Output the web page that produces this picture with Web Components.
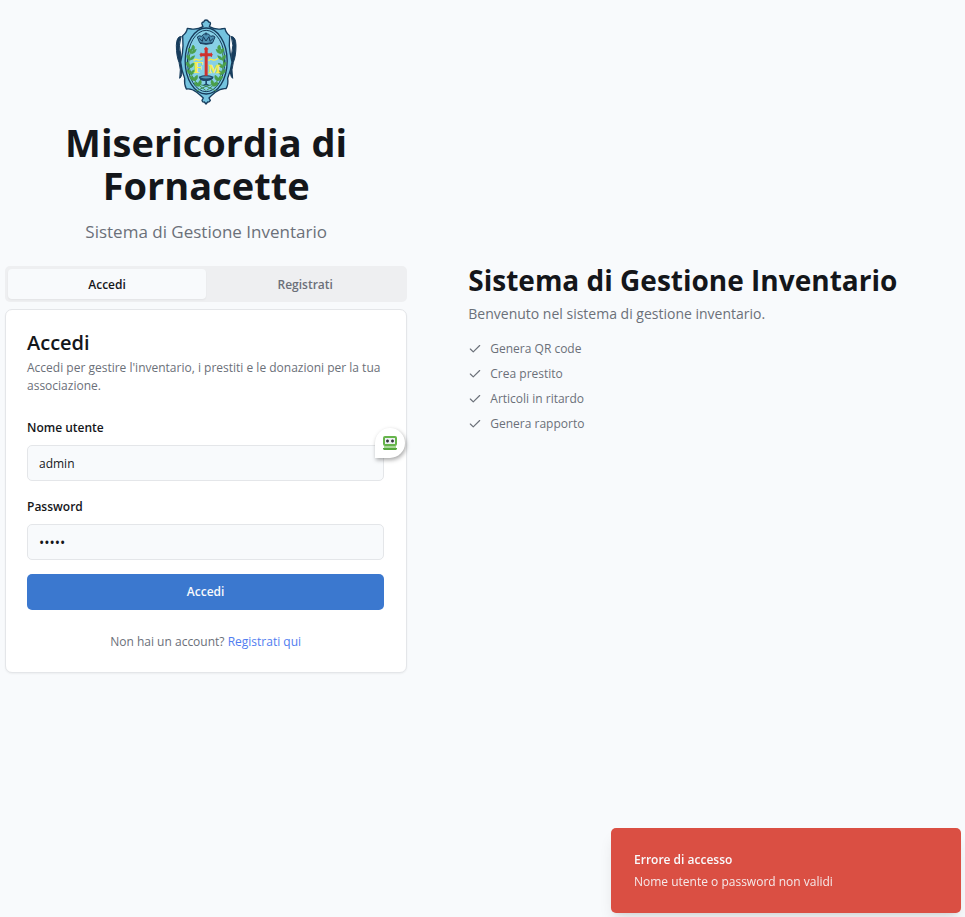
<!DOCTYPE html>
<html lang="it">
<head>
<meta charset="utf-8">
<meta name="viewport" content="width=device-width, initial-scale=1">
<title>Misericordia di Fornacette</title>
<style>
  :root {
    --bg: #f8fafc; --ink: #14161a; --muted: #6b7079; --line: #e4e6e9;
    --primary: #3b78cf; --danger: #da4f43;
  }
  body {
    margin: 0; min-height: 100vh; background: var(--bg); color: var(--ink);
    font: 400 12px/18px "Open Sans", "Noto Sans", sans-serif;
  }
</style>
</head>
<body>
<auth-page>
  <brand-header slot="main">
    <span slot="title">Misericordia di Fornacette</span>
    <span slot="tagline">Sistema di Gestione Inventario</span>
  </brand-header>
  <auth-tabs slot="main"></auth-tabs>
  <login-card slot="main">
    <span slot="title">Accedi</span>
    <span slot="description">Accedi per gestire l'inventario, i prestiti e le donazioni per la tua associazione.</span>
  </login-card>
  <feature-panel slot="aside">
    <span slot="title">Sistema di Gestione Inventario</span>
    <span slot="intro">Benvenuto nel sistema di gestione inventario.</span>
    <check-item>Genera QR code</check-item>
    <check-item>Crea prestito</check-item>
    <check-item>Articoli in ritardo</check-item>
    <check-item>Genera rapporto</check-item>
  </feature-panel>
</auth-page>
<toast-message>
  <span slot="title">Errore di accesso</span>
  Nome utente o password non validi
</toast-message>

<script>
const define = (name, html, setup) => customElements.define(name, class extends HTMLElement {
  constructor() {
    super();
    this.attachShadow({ mode: 'open' }).innerHTML = '<style>:host,*{box-sizing:border-box}</style>' + html;
  }
  connectedCallback() { if (setup) setup(this, this.shadowRoot); }
});

define('auth-page', `
<style>
  :host { display: grid; grid-template-columns: 9fr 11fr; gap: 61px; align-items: center; padding: 19px 5px; }
  main { display: flex; flex-direction: column; min-width: 0; }
  aside { min-width: 0; }
  @media (max-width: 700px) { :host { grid-template-columns: 1fr; gap: 32px; } }
</style>
<main><slot name="main"></slot></main>
<aside><slot name="aside"></slot></aside>`);

define('brand-crest', `
<style>:host { display: block; } svg { display: block; width: 62px; height: 86px; }</style>
<svg viewBox="47 25 186 258" role="img" aria-label="Stemma della Misericordia">
  <g stroke-linejoin="round" stroke-linecap="round">
    <path d="M65 78Q52 76 51 104Q51 136 59 155Q66 176 61 203Q70 196 68 170Q61 156 64 130Q56 104 65 78ZM216 78Q229 76 230 104Q230 136 222 155Q215 176 220 203Q211 196 213 170Q220 156 217 130Q225 104 216 78Z" fill="#173c5c" stroke="#173c5c" stroke-width="3"/>
    <path d="M128 41Q126 34 133 34Q135 28 140 28Q146 28 148 34Q155 34 153 41L150 48Q166 57 184 55L197 53Q199 66 211 75L210 105Q211 126 218 154Q215 176 205 203Q208 221 200 234Q184 232 168 245Q157 254 149 262L153 269Q150 275 145 274L140 280L135 274Q129 275 128 269L132 262Q122 253 112 245Q96 232 81 235Q74 221 76 203Q66 176 64 154Q71 126 71 105L70 75Q82 66 84 53L97 55Q115 57 131 48Z" fill="#74c3df" stroke="#173c5c" stroke-width="4"/>
    <ellipse cx="140.500" cy="151" rx="63" ry="99" fill="#7dcae3" stroke="#173c5c" stroke-width="4"/>
    <ellipse cx="140.500" cy="151" rx="56" ry="92" fill="#87d0e6" stroke="#173c5c" stroke-width="3"/>
  </g>
  <g fill="none" stroke="#3f8c51" stroke-width="3">
    <path d="M102 106Q82 137 91 176Q101 216 139 239M179 106Q199 137 190 176Q180 216 142 239M105 218Q140 222 170 241M176 218Q141 222 111 241"/>
  </g>
  <g fill="#4a9f4a" stroke="#4a9f4a" stroke-width="2">
    <path d="M101 103q10 8 0 17q-8-8 0-17M88 113q12 3 9 15q-12-3-9-15M111 116q-2 12-14 13q2-12 14-13M83 133q12 4 9 16q-12-4-9-16M106 135q-2 12-14 13q2-12 14-13M81 154q12 4 10 16q-12-4-10-16M104 158q-1 12-13 14q0-13 13-14M83 177q13 2 13 14q-13-2-13-14M105 178q0 12-10 15q-3-12 10-15M91 197q13 0 15 12q-13 2-15-12M114 194q3 12-8 17q-5-12 8-17M105 216q13-2 16 10q-13 3-16-10M124 207q6 11-4 18q-7-10 4-18"/>
    <path transform="translate(281 0) scale(-1 1)" d="M101 103q10 8 0 17q-8-8 0-17M88 113q12 3 9 15q-12-3-9-15M111 116q-2 12-14 13q2-12 14-13M83 133q12 4 9 16q-12-4-9-16M106 135q-2 12-14 13q2-12 14-13M81 154q12 4 10 16q-12-4-10-16M104 158q-1 12-13 14q0-13 13-14M83 177q13 2 13 14q-13-2-13-14M105 178q0 12-10 15q-3-12 10-15M91 197q13 0 15 12q-13 2-15-12M114 194q3 12-8 17q-5-12 8-17M105 216q13-2 16 10q-13 3-16-10M124 207q6 11-4 18q-7-10 4-18"/>
  </g>
  <path d="M121 96L114 79Q119 73 127 77Q132 68 140 69Q149 68 154 77Q162 73 167 79L160 96Q140 102 121 96Z" fill="#4f93b4" stroke="#173c5c" stroke-width="3"/>
  <path d="M119 83L129 92L132 78L140 91L149 78L152 92L162 83M122 98Q140 104 159 98M140 65V74" fill="none" stroke="#173c5c" stroke-width="3"/>
  <g fill="#1f4a6b">
    <path d="M118 198Q140 188 163 198L160 205Q151 212 143 211V219L152 224H129L138 219V211Q125 211 121 205Z"/>
    <path d="M123 200Q140 194 158 200Q140 207 123 200" fill="#5797b4"/>
  </g>
  <g fill="#f5ee51" font-family="Liberation Serif, serif" font-weight="700" text-anchor="middle">
    <text x="117" y="187" font-size="52">F</text><text x="165" y="187" font-size="38" stroke="#f5ee51" stroke-width="1">M</text>
  </g>
  <path d="M104 151Q106 143 114 147Q122 151 129 143M148 151Q151 143 159 147Q168 151 176 143" fill="none" stroke="#f5ee51" stroke-width="4"/>
  <path d="M136 113L140 108L145 113V128H156L161 132L156 137H145V195H136V137H125L120 132L125 128H136Z" fill="#cf332f"/>
  <path d="M134 115H147M125 126V139M156 126V139" stroke="#cf332f" stroke-width="3"/>
</svg>`);

define('brand-header', `
<style>
  :host { display: flex; flex-direction: column; align-items: center; text-align: center; margin-bottom: 23px; }
  h1 { margin: 16px 0 14px; max-width: 320px; font-size: 38px; line-height: 43px; font-weight: 700; }
  p { margin: 0; font-size: 17px; line-height: 22px; color: var(--muted); }
</style>
<brand-crest></brand-crest>
<h1><slot name="title"></slot></h1>
<p><slot name="tagline"></slot></p>`);

define('auth-tabs', `
<style>
  :host { display: grid; grid-template-columns: 1fr 1fr; height: 36px; padding: 3px; border-radius: 5px; background: #eeeff1; margin-bottom: 7px; }
  button { border: 0; border-radius: 4px; background: none; color: var(--muted); font: inherit; font-weight: 600; padding: 1px 0 0; cursor: pointer; }
  button[aria-selected=true] { background: var(--bg); color: var(--ink); box-shadow: 0 1px 2px #0000000d; }
</style>
<button role="tab" aria-selected="true">Accedi</button>
<button role="tab" aria-selected="false">Registrati</button>`,
(host, root) => {
  host.setAttribute('role', 'tablist');
  const tabs = [...root.querySelectorAll('button')];
  tabs.forEach(t => t.onclick = () => tabs.forEach(o => o.setAttribute('aria-selected', o === t)));
});

define('text-field', `
<style>
  :host { display: block; position: relative; }
  label { display: block; margin-bottom: 8px; font-weight: 600; }
  input { display: block; width: 100%; height: 36px; padding: 0 11px; border: 1px solid var(--line); border-radius: 5px; background: var(--bg); color: var(--ink); font: inherit; outline-color: var(--primary); }
  input[type=password] { font-size: 14px; }
  ::slotted(*) { position: absolute; right: -21px; top: 9px; }
</style>
<label for="control"></label>
<input id="control">
<slot></slot>`,
(host, root) => {
  root.querySelector('label').textContent = host.getAttribute('label');
  const input = root.querySelector('input');
  input.type = host.getAttribute('type') || 'text';
  input.value = host.getAttribute('value') || '';
});

define('autofill-badge', `
<style>
  :host { display: block; }
  button { display: grid; place-items: center; width: 30px; height: 30px; padding: 0; border: 0; border-radius: 15px 15px 15px 0; background: #fff; box-shadow: 1px 2px 4px #00000059; cursor: pointer; }
</style>
<button type="button" aria-label="Compila automaticamente">
  <svg width="14" height="14" viewBox="0 0 14 14">
    <rect x="1" y="1" width="12" height="8" rx="1" fill="#eef0f4" stroke="#66b44b" stroke-width="2"/>
    <path d="M3 5H6M4.500 3.500V6.500M8 5H11M9.500 3.500V6.500" stroke="#34373d" stroke-width="1.500"/>
    <path d="M1 10H13V12H1Z" fill="#a9d799"/><path d="M0 12H14V13L13 14H1L0 13Z" fill="#55a83c"/>
  </svg>
</button>`);

define('login-card', `
<style>
  :host { display: block; padding: 21px 22px 21px 21px; border: 1px solid var(--line); border-radius: 7px; background: #fff; box-shadow: 0 1px 2px #0000000d; }
  h2 { margin: 0 0 4px; font-size: 20px; line-height: 24px; font-weight: 600; }
  .description { margin: 0 0 24px; color: var(--muted); }
  form { display: flex; flex-direction: column; }
  text-field + text-field { margin-top: 17px; }
  .submit { height: 36px; margin-top: 14px; border: 0; border-radius: 5px; background: var(--primary); color: var(--bg); font: inherit; font-weight: 600; cursor: pointer; }
  .switch { margin: 23px 0 0; text-align: center; color: var(--muted); }
  a { color: #507df0; text-decoration: none; }
  a:hover { text-decoration: underline; }
</style>
<h2><slot name="title"></slot></h2>
<p class="description"><slot name="description"></slot></p>
<form>
  <text-field label="Nome utente" value="admin"><autofill-badge></autofill-badge></text-field>
  <text-field label="Password" type="password" value="admin"></text-field>
  <button class="submit" type="submit">Accedi</button>
</form>
<p class="switch">Non hai un account? <a href="#registrati">Registrati qui</a></p>`,
(host, root) => { root.querySelector('form').onsubmit = e => e.preventDefault(); });

define('check-item', `
<style>
  :host { display: flex; align-items: center; gap: 8px; color: var(--muted); }
  svg { width: 14px; height: 14px; flex: none; }
</style>
<svg viewBox="0 0 24 24" fill="none" stroke="currentColor" stroke-width="2" stroke-linecap="round" stroke-linejoin="round" aria-hidden="true"><path d="M20 6 9 17l-5-5"/></svg>
<span><slot></slot></span>`, host => host.setAttribute('role', 'listitem'));

define('feature-panel', `
<style>
  :host { display: block; padding-top: 2px; }
  h2 { margin: 0 0 7px; font-size: 28px; line-height: 36px; font-weight: 700; }
  p { margin: 0 0 17px; font-size: 14px; line-height: 18px; color: var(--muted); }
  div { display: grid; gap: 7px; }
</style>
<h2><slot name="title"></slot></h2>
<p><slot name="intro"></slot></p>
<div role="list"><slot></slot></div>`);

define('toast-message', `
<style>
  :host { display: block; position: fixed; right: 4px; bottom: 4px; width: 350px; max-width: calc(100% - 8px); padding: 23px 23px 22px; border-radius: 5px; background: var(--danger); color: var(--bg); box-shadow: 0 10px 15px -3px #0000001a, 0 4px 6px -4px #0000001a; }
  strong { display: block; font-weight: 600; margin-bottom: 4px; }
  div { opacity: .9; }
</style>
<strong><slot name="title"></slot></strong>
<div><slot></slot></div>`, host => host.setAttribute('role', 'alert'));
</script>
</body>
</html>
